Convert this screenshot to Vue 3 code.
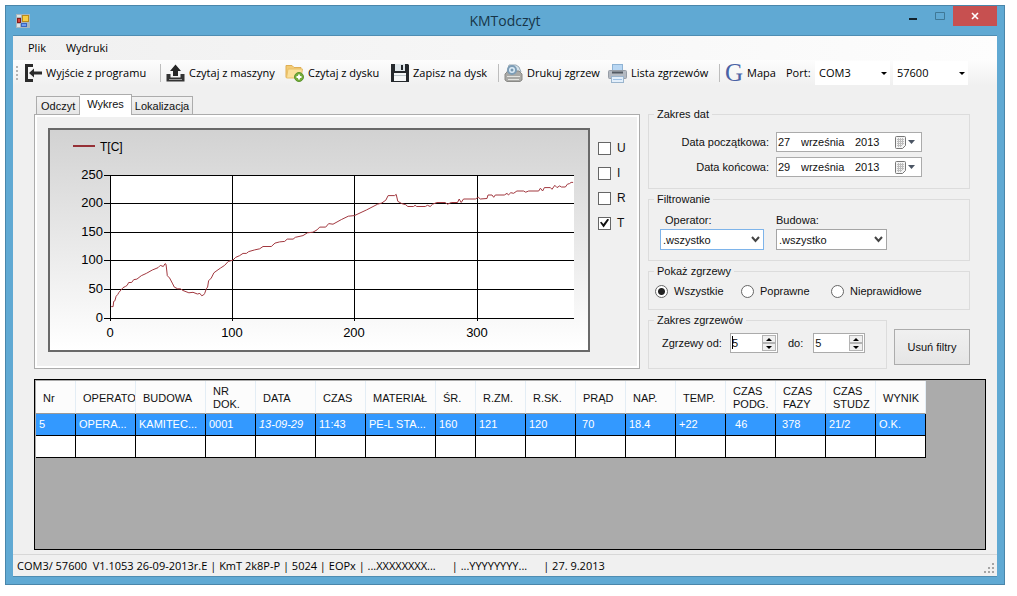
<script setup>
import { ref, reactive } from 'vue'

const menus = ['Plik', 'Wydruki']
const tabs = ['Odczyt', 'Wykres', 'Lokalizacja']
const activeTab = ref('Wykres')

const series = reactive([
  { name: 'U', on: false },
  { name: 'I', on: false },
  { name: 'R', on: false },
  { name: 'T', on: true },
])

const dates = reactive([
  { id: 'from', label: 'Data początkowa:', day: '27', month: 'września', year: '2013' },
  { id: 'to', label: 'Data końcowa:', day: '29', month: 'września', year: '2013' },
])

const filters = [
  { id: 'operator', label: 'Operator:' },
  { id: 'budowa', label: 'Budowa:' },
]

const kinds = ['Wszystkie', 'Poprawne', 'Nieprawidłowe']
const kind = ref('Wszystkie')

const ranges = reactive([
  { id: 'first', label: 'Zgrzewy od:', value: 5 },
  { id: 'last', label: 'do:', value: 5 },
])

const columns = [
  { w: 40, head: 'Nr', cell: '5' },
  { w: 60, head: 'OPERATO', cell: 'OPERA...' },
  { w: 70, head: 'BUDOWA', cell: 'KAMITEC...' },
  { w: 50, head: 'NR DOK.', cell: '0001' },
  { w: 60, head: 'DATA', cell: '13-09-29', italic: true },
  { w: 50, head: 'CZAS', cell: '11:43' },
  { w: 70, head: 'MATERIAŁ', cell: 'PE-L STA...' },
  { w: 40, head: 'ŚR.', cell: '160' },
  { w: 50, head: 'R.ZM.', cell: '121' },
  { w: 50, head: 'R.SK.', cell: '120' },
  { w: 50, head: 'PRĄD', cell: '\u00a070' },
  { w: 50, head: 'NAP.', cell: '18.4' },
  { w: 50, head: 'TEMP.', cell: '+22' },
  { w: 50, head: 'CZAS PODG.', cell: '\u00a0\u00a046' },
  { w: 50, head: 'CZAS FAZY', cell: '\u00a0378' },
  { w: 50, head: 'CZAS STUDZ', cell: '21/2' },
  { w: 50, head: 'WYNIK', cell: 'O.K.' },
]

// Chart geometry: time on x (0-380), temperature on y (0-250)
const plot = { x: 60, y: 45, w: 464, h: 143 }
const px = (t) => plot.x + t * 1.222
const py = (v) => plot.y + plot.h - v * 0.572
const xTicks = [0, 100, 200, 300]
const yTicks = [0, 50, 100, 150, 200, 250]
const samples = [
  [1, 20], [2.5, 20], [3, 29], [4, 30], [5, 38], [6.3, 41], [7.4, 45], [9, 49], [10.6, 53], [12.5, 55], [14, 57],
  [15.3, 62], [17.7, 62], [19.4, 67], [22, 68], [25.6, 74], [29.7, 78], [34.6, 84], [39.3, 88], [41.2, 92], [43.6, 90],
  [45, 95], [45.8, 94], [46.4, 84], [46.9, 74], [48.8, 70], [51, 61], [52.6, 54], [55.4, 51], [57.6, 51], [59.7, 48],
  [64.6, 44], [67.9, 45], [71.5, 42], [73.6, 43], [75, 39], [76.4, 40], [77.5, 43], [78.8, 51], [79.9, 54], [80.7, 65],
  [82.9, 70], [85, 79], [87.6, 83], [90.3, 87], [93.8, 92], [96.8, 99], [100.6, 101], [102.8, 106], [106, 109],
  [108.8, 113], [111.6, 113], [113.5, 116], [118.4, 119], [122.5, 121], [125.2, 125], [132, 125], [135, 131],
  [138.8, 133], [143, 134], [145, 138], [149.8, 138], [151.7, 141], [157.9, 144], [161.5, 149], [166, 150], [169.4, 154],
  [171.6, 159], [176.5, 159], [179, 165], [182.5, 164], [189.3, 172], [195, 178], [200, 179], [210, 189], [219, 199],
  [222.4, 201], [225.7, 206], [227.6, 214], [232.8, 214], [234.2, 216], [235.5, 204], [238.8, 200], [242, 198],
  [243.7, 195], [248.4, 195], [249.7, 197], [251, 195], [258, 195], [259.8, 197], [262, 195], [264, 199], [267.5, 202],
  [274.3, 202], [276.2, 199], [279.2, 202], [284.4, 202], [285.8, 208], [287.4, 202], [289.3, 208], [299, 208],
  [301.4, 211], [303, 208], [308.5, 209], [309.3, 215], [312.6, 215], [314, 211], [315.3, 215], [322.7, 215], [325, 218],
  [326, 215], [328, 219], [330.3, 218], [333, 222], [338.5, 222], [340.2, 220], [342.6, 222], [350.8, 222], [352.2, 227],
  [354, 222], [355.5, 228], [360.4, 228], [361.7, 225], [364, 232], [365.8, 228], [368, 231], [369.4, 229], [372.7, 229],
  [374.3, 234], [376, 235], [377.3, 237], [379, 237],
]
const line = samples.map(([t, v]) => `${px(t).toFixed(1)},${py(v).toFixed(1)}`).join(' ')
</script>

<template>
  <div class="desktop">
    <div class="window">
      <header class="titlebar">
        <svg class="app-icon" width="14" height="14" viewBox="0 0 14 14" aria-hidden="true">
          <rect width="14" height="14" fill="#a9b7bd" />
          <rect x="6.500" y="1.500" width="6" height="6" fill="#f8cf45" stroke="#b98b1c" />
          <rect x="1.500" y="4.500" width="3" height="4" fill="#d8423a" stroke="#861b1b" />
          <rect x="1" y="1" width="4" height="2" fill="#dce3e6" />
          <rect x="5.500" y="9.500" width="5" height="3" fill="#6e9df0" stroke="#3b65bd" />
          <rect x="1" y="10" width="3" height="3" fill="#dce3e6" />
        </svg>
        <h1>KMTodczyt</h1>
        <div class="caption-buttons">
          <button type="button" class="cap" aria-label="Minimalizuj">
            <svg width="10" height="12" viewBox="0 0 10 12"><rect x="1" y="8" width="8" height="2" fill="#12222c" /></svg>
          </button>
          <button type="button" class="cap" aria-label="Maksymalizuj">
            <svg width="10" height="12" viewBox="0 0 10 12"><path d="M.5 2.500h9v7h-9z" fill="none" stroke="#3f7896" /></svg>
          </button>
          <button type="button" class="cap close" aria-label="Zamknij">
            <svg width="8" height="8" viewBox="0 0 8 8"><path d="M1 1l6 6M7 1L1 7" stroke="#fff" stroke-width="1.600" /></svg>
          </button>
        </div>
      </header>

      <div class="client">
        <nav class="menubar">
          <button v-for="m in menus" :key="m" type="button">{{ m }}</button>
        </nav>

        <div class="toolbar" role="toolbar">
          <i class="grip"></i>
          <button type="button" class="tool w-exit">
            <svg width="18" height="18" viewBox="0 0 18 18">
              <path d="M9 1.500H2.500v15H9" fill="none" stroke="#2b2b2b" stroke-width="3" />
              <path d="M5 9l5-4.500v3h8v3h-8v3z" fill="#2b2b2b" />
            </svg>Wyjście z programu
          </button>
          <i class="sep"></i>
          <button type="button" class="tool w-read">
            <svg width="19" height="18" viewBox="0 0 19 18">
              <path d="M9.500 0.500L15 7h-3v5H7V7H4z" fill="#262626" />
              <path d="M.5 10h4v3.500h10V10h4v7.500H.5z" fill="#333" />
              <path d="M3 15.500h13" stroke="#999" />
            </svg>Czytaj z maszyny
          </button>
          <button type="button" class="tool w-disk">
            <svg width="19" height="18" viewBox="0 0 19 18">
              <path d="M1 1.500h6l2 2h7v10H1z" fill="#f3cb74" stroke="#dfaf55" />
              <path d="M3 5h14.500l-1.500 9H1.500z" fill="#fbe09a" stroke="#e8bf68" />
              <circle cx="14" cy="13" r="4.500" fill="#76ad39" stroke="#5c9430" />
              <path d="M14 10.500v5M11.500 13h5" stroke="#fff" stroke-width="1.800" />
            </svg>Czytaj z dysku
          </button>
          <button type="button" class="tool w-save">
            <svg width="18" height="18" viewBox="0 0 18 18">
              <path d="M0 0h17l1 1v17H0z" fill="#25292d" />
              <rect x="4" y="0" width="10" height="7" fill="#dfe6ea" />
              <rect x="10" y="1" width="2" height="5" fill="#25292d" />
              <rect x="3" y="9" width="12" height="8" fill="#f5f7f8" />
              <path d="M3 11.500h12" stroke="#b9c4ca" />
            </svg>Zapisz na dysk
          </button>
          <i class="sep"></i>
          <button type="button" class="tool w-print">
            <svg width="19" height="18" viewBox="0 0 19 18">
              <path d="M3 8l2-7h7l3 2 2 5z" fill="#d5e3ec" stroke="#9aa9b3" />
              <path d="M1 10l3-3h11l3 3v6l-2 1.500H3L1 16z" fill="#a9a9a6" stroke="#8a8a87" />
              <path d="M3 12.500h13M4 15.500h11" stroke="#e3e3df" />
              <circle cx="8" cy="6" r="4" fill="#dcecf7" stroke="#7d9db6" stroke-width="2" />
              <circle cx="8" cy="6" r="1.500" fill="#7798b1" />
            </svg>Drukuj zgrzew
          </button>
          <button type="button" class="tool w-list">
            <svg width="19" height="19" viewBox="0 0 19 19">
              <rect x="4.500" y=".5" width="10" height="7" fill="#b9d7f3" stroke="#8fb3d4" />
              <rect x=".5" y="6.500" width="18" height="8" rx="1" fill="#b4bac2" stroke="#969da6" />
              <path d="M4 8.500h11" stroke="#525a63" stroke-width="2" />
              <rect x="3.500" y="12.500" width="12" height="6" fill="#e3effb" stroke="#9bb5cd" />
              <path d="M5 15.500h9" stroke="#9ec2e6" />
            </svg>Lista zgrzewów
          </button>
          <i class="sep"></i>
          <button type="button" class="tool w-map">
            <span class="g-icon" aria-hidden="true">G</span>Mapa
          </button>
          <label class="port" for="port">Port:</label>
          <span class="combo flat">
            <select id="port"><option>COM3</option></select>
            <svg width="6" height="3" viewBox="0 0 6 3"><path d="M0 0h6L3 3z" /></svg>
          </span>
          <span class="combo flat">
            <select aria-label="Prędkość"><option>57600</option></select>
            <svg width="6" height="3" viewBox="0 0 6 3"><path d="M0 0h6L3 3z" /></svg>
          </span>
        </div>

        <main>
          <div class="upper">
            <section class="left">
              <div class="tabs" role="tablist">
                <button
                  v-for="t in tabs" :key="t" type="button" role="tab"
                  :class="{ active: activeTab === t }" :aria-selected="activeTab === t"
                  @click="activeTab = t"
                >{{ t }}</button>
              </div>
              <div class="tabpage">
                <div class="chart">
                  <svg viewBox="0 0 538 220" role="img" aria-label="T[C]">
                    <rect :x="plot.x" :y="plot.y" :width="plot.w" :height="plot.h" fill="#fff" />
                    <g stroke="#000" shape-rendering="crispEdges">
                      <line v-for="v in yTicks" :key="v" :x1="plot.x - 6" :x2="plot.x + plot.w" :y1="Math.floor(py(v)) + 0.5" :y2="Math.floor(py(v)) + 0.5" />
                      <line v-for="t in xTicks" :key="t" :x1="Math.round(px(t)) + 0.5" :x2="Math.round(px(t)) + 0.5" :y1="plot.y" :y2="plot.y + plot.h + 3" />
                    </g>
                    <g class="axis" text-anchor="end">
                      <text v-for="v in yTicks" :key="v" :x="plot.x - 7" :y="Math.floor(py(v)) + 4">{{ v }}</text>
                    </g>
                    <g class="axis" text-anchor="middle">
                      <text v-for="t in xTicks" :key="t" :x="Math.round(px(t))" y="207">{{ t }}</text>
                    </g>
                    <polyline :points="line" fill="none" stroke="#a2383f" />
                    <line x1="23" x2="45" y1="16" y2="16" stroke="#963036" stroke-width="2" />
                    <text class="legend" x="50" y="21">T[C]</text>
                  </svg>
                </div>
                <div class="series">
                  <label v-for="s in series" :key="s.name">
                    <input v-model="s.on" type="checkbox" />{{ s.name }}
                  </label>
                </div>
              </div>
            </section>

            <section class="right">
              <fieldset class="dates">
                <legend>Zakres dat</legend>
                <template v-for="d in dates" :key="d.id">
                  <label :for="d.id">{{ d.label }}</label>
                  <span class="picker">
                    <input :id="d.id" v-model="d.day" class="day" type="text" />
                    <input v-model="d.month" class="month" type="text" aria-label="Miesiąc" />
                    <input v-model="d.year" class="year" type="text" aria-label="Rok" />
                    <button type="button" aria-label="Kalendarz">
                      <svg width="20" height="13" viewBox="0 0 20 13">
                        <path d="M.5 1.500q0-1 1-1h8q1 0 1 1v8l-3 3h-6q-1 0-1-1z" fill="#f4f4f4" stroke="#777" />
                        <path d="M2 3.500h7M2 5.500h7M2 7.500h7M2 9.500h5M3.500 2v9M5.500 2v9M7.500 2v7" stroke="#bdbdbd" />
                        <path d="M13 4h7l-3.500 4z" fill="#4b5564" />
                      </svg>
                    </button>
                  </span>
                </template>
              </fieldset>

              <fieldset class="filters">
                <legend>Filtrowanie</legend>
                <div v-for="f in filters" :key="f.id" :class="['filter', f.id]">
                  <label :for="f.id">{{ f.label }}</label>
                  <span class="combo boxed">
                    <select :id="f.id"><option>.wszystko</option></select>
                    <svg width="9" height="7" viewBox="0 0 9 7"><path d="M1 1l3.500 4L8 1" fill="none" stroke="#444" stroke-width="2" /></svg>
                  </span>
                </div>
              </fieldset>

              <fieldset class="kinds">
                <legend>Pokaż zgrzewy</legend>
                <label v-for="k in kinds" :key="k">
                  <input v-model="kind" type="radio" name="kind" :value="k" />{{ k }}
                </label>
              </fieldset>

              <div class="bottom">
                <fieldset class="range">
                  <legend>Zakres zgrzewów</legend>
                  <template v-for="r in ranges" :key="r.id">
                    <label :for="r.id">{{ r.label }}</label>
                    <span :class="['spin', r.id]">
                      <i v-if="r.id === 'first'" class="caret"></i>
                      <input :id="r.id" v-model.number="r.value" type="number" />
                      <span class="arrows">
                        <button type="button" aria-label="Więcej" @click="r.value++">
                          <svg width="6" height="3" viewBox="0 0 6 3"><path d="M0 3h6L3 0z" /></svg>
                        </button>
                        <button type="button" aria-label="Mniej" @click="r.value--">
                          <svg width="6" height="3" viewBox="0 0 6 3"><path d="M0 0h6L3 3z" /></svg>
                        </button>
                      </span>
                    </span>
                  </template>
                </fieldset>
                <button type="button" class="clear">Usuń filtry</button>
              </div>
            </section>
          </div>

          <div class="grid">
            <table>
              <colgroup>
                <col v-for="(c, i) in columns" :key="i" :style="{ width: c.w + 'px' }" />
              </colgroup>
              <thead>
                <tr><th v-for="(c, i) in columns" :key="i" scope="col">{{ c.head }}</th></tr>
              </thead>
              <tbody>
                <tr class="selected">
                  <td v-for="(c, i) in columns" :key="i" :class="{ italic: c.italic }">{{ c.cell }}</td>
                </tr>
                <tr><td v-for="(c, i) in columns" :key="i"></td></tr>
              </tbody>
            </table>
          </div>
        </main>

        <footer class="status">
          <span>COM3/ 57600&nbsp; V1.1053 26-09-2013r.E | KmT 2k8P-P | 5024 | EOPx | ...XXXXXXXX...</span>
          <span>| ...YYYYYYYY...</span>
          <span>| 27. 9.2013</span>
          <svg class="resize" width="11" height="11" viewBox="0 0 11 11" fill="#a5a5a5" aria-hidden="true">
            <path d="M8 0h2v2H8zM4 4h2v2H4zM8 4h2v2H8zM0 8h2v2H0zM4 8h2v2H4zM8 8h2v2H8z" />
          </svg>
        </footer>
      </div>
    </div>
  </div>
</template>

<style>
body { background: #fff; }
</style>

<style scoped>
* { box-sizing: border-box; }
button, input, select { font: inherit; color: inherit; margin: 0; padding: 0; border: 0; background: none; border-radius: 0; outline: none; }
svg { display: block; flex: none; }

.desktop {
  display: flex; min-height: 100vh; padding: 5px 12px 11px 5px;
  font: 11px/14px "Liberation Sans", Arial, sans-serif; color: #111;
}
.window {
  flex: 1; min-width: 0; display: flex; flex-direction: column;
  background: #60a9d3; border: 1px solid #4a86aa; padding: 0 7px 7px;
}

.titlebar { display: grid; grid-template-columns: 1fr auto 1fr; align-items: center; height: 29px; }
.app-icon { margin-left: 3px; }
h1 { margin: 0; font: 400 14px/20px "Open Sans", "Noto Sans", sans-serif; color: #173548; }
.caption-buttons { display: flex; justify-content: flex-end; align-self: start; }
.cap { width: 27px; height: 20px; display: flex; align-items: center; justify-content: center; }
.cap.close { width: 44px; background: #c75050; }

.client { flex: 1; display: flex; flex-direction: column; background: #f0f0f0; border: 1px solid #4f8db2; border-width: 1px 0; }

.menubar, .toolbar, .status { font: 11px/16px "Open Sans", "Noto Sans", sans-serif; color: #000; }
.menubar { display: flex; gap: 20px; padding: 0 15px; height: 24px; align-items: center; background: linear-gradient(to right, #f0f0f0, #fdfdfd); }

.toolbar { display: flex; align-items: center; height: 26px; padding-left: 3px; background: linear-gradient(#fdfdfd, #f0f0f0); }
.grip { width: 2px; height: 15px; margin-right: 6px; background: repeating-linear-gradient(#b4b4b4 0 2px, transparent 2px 4px); }
.sep { width: 1px; height: 18px; margin: 0 5px; background: #bdbdbd; }
.tool { display: flex; align-items: center; gap: 4px; white-space: nowrap; }
.w-exit { width: 131px; }
.w-read { width: 119px; }
.w-disk { width: 106px; }
.w-save { width: 102px; }
.w-print { width: 104px; }
.w-list { width: 106px; }
.w-map { width: 61px; }
.g-icon { width: 18px; font: 25px/26px "Liberation Serif", serif; color: #4a62a5; }
.port { width: 29px; }

.combo { position: relative; display: flex; }
.combo select { appearance: none; width: 100%; }
.combo svg { position: absolute; pointer-events: none; top: 0; bottom: 0; margin: auto; }
.flat { width: 75px; height: 24px; margin-right: 3px; background: #fff; }
.flat select { padding-left: 4px; }
.flat svg { right: 3px; }

main { flex: 1; display: flex; flex-direction: column; padding: 8px 11px 4px 21px; }
.upper { display: flex; gap: 8px; padding-right: 16px; }
.left { flex: 1; min-width: 0; display: flex; flex-direction: column; }
.tabs { display: flex; align-items: flex-end; padding-left: 2px; height: 20px; }
.tabs button { height: 18px; padding: 0 4px; border: 1px solid #acacac; border-width: 1px 1px 0 0; background: linear-gradient(#f2f2f2, #e6e6e6); }
.tabs button:first-child { border-left-width: 1px; }
.tabs button:last-child { padding: 0 3px; }
.tabs .active { position: relative; height: 21px; padding: 0 7px 3px; margin-bottom: -1px; background: #fff; }
.tabpage { flex: 1; display: flex; gap: 8px; padding: 13px; border: 1px solid #acacac; box-shadow: inset 0 0 0 2px #fff; }
.chart { flex: 1; min-width: 0; align-self: flex-start; border: 2px solid #696969; background: linear-gradient(#d2d2d2, #fff); }
.chart svg { width: 100%; }
.axis text { font-size: 13px; }
.legend { font-size: 12px; }

.series { display: flex; flex-direction: column; gap: 11px; width: 28px; padding-top: 13px; }
.series label { display: flex; align-items: center; gap: 6px; height: 14px; font-size: 12px; }
.series input { appearance: none; flex: none; width: 13px; height: 13px; border: 1px solid #666; background: #fff; }
.series input:checked::before { content: ""; display: block; width: 9px; height: 9px; margin: 1px; background: #111; clip-path: polygon(0 45%, 15% 35%, 38% 62%, 85% 0, 100% 15%, 40% 100%); }

.right { width: 322px; flex: none; display: flex; flex-direction: column; gap: 4px; padding-top: 14px; }
fieldset { min-width: 0; margin: 0; border: 1px solid #dcdcdc; }
legend { height: 13px; padding: 0 3px; line-height: 13px; }
.dates { display: grid; grid-template-columns: 1fr 146px; gap: 5px 7px; align-items: center; padding: 11px 47px 11px 5px; }
.dates label { text-align: right; }
.picker { display: flex; align-items: center; height: 20px; padding: 0 5px 0 1px; border: 1px solid #ababab; background: #fff; }
.picker .day { width: 23px; }
.picker .month { width: 54px; }
.picker .year { width: 40px; }

.filters { display: flex; gap: 12px; padding: 7px 11px 10px; }
.filters legend { margin-left: -6px; }
.filter { display: flex; flex-direction: column; gap: 2px; width: 111px; }
.operator { width: 104px; }
.operator label { padding-left: 5px; }
.boxed { height: 21px; border: 1px solid #a5a5a5; background: #fff; }
.operator .boxed { border-color: #7eb4ea; }
.boxed select { padding-left: 2px; }
.boxed svg { right: 3px; }

.kinds { display: grid; grid-template-columns: 86px 90px 1fr; padding: 6px 6px 11px; }
.kinds legend { margin-left: -1px; }
.kinds label { display: flex; align-items: center; gap: 6px; }
.kinds input { appearance: none; flex: none; width: 13px; height: 13px; border: 1px solid #666; border-radius: 50%; background: #fff; }
.kinds input:checked { background: radial-gradient(circle, #222 3px, #fff 4px); }

.bottom { display: flex; justify-content: space-between; align-items: flex-end; }
.range { display: flex; align-items: center; width: 239px; padding: 6px 13px 15px; }
.range legend { margin-left: -8px; }
.range label { margin-right: 8px; white-space: nowrap; }
.spin { position: relative; display: flex; height: 20px; border: 1px solid #ababab; background: #fff; }
.spin.first { width: 48px; margin-right: 10px; }
.spin.last { width: 52px; margin-left: 2px; }
.spin input { appearance: textfield; flex: 1; min-width: 0; padding-left: 1px; }
.spin input::-webkit-inner-spin-button { appearance: none; margin: 0; }
.caret { position: absolute; left: 1px; top: 2px; width: 1px; height: 13px; background: #000; }
.arrows { display: flex; flex-direction: column; width: 16px; padding: 1px; }
.arrows button { flex: 1; display: flex; align-items: center; justify-content: center; border: 1px solid #b4b4b4; background: #f0f0f0; }
.clear { width: 76px; height: 36px; margin-bottom: 4px; border: 1px solid #acacac; background: linear-gradient(#f0f0f0, #e5e5e5); }

.grid { flex: 1; margin-top: 10px; padding-left: 1px; border: 1px solid #000; background: #ababab; overflow: hidden; }
table { table-layout: fixed; width: 890px; border-collapse: separate; border-spacing: 0; margin-top: 1px; }
th, td { overflow: hidden; text-align: left; white-space: nowrap; }
th { height: 33px; padding: 2px 0 0 7px; font-weight: 400; line-height: 13px; white-space: normal; background: #fcfcfc; border-right: 1px solid #e3edf5; border-bottom: 1px solid #9a9a9a; }
td { height: 22px; padding: 0 0 1px 3px; background: #fff; border: 1px solid #000; border-width: 0 1px 1px 0; }
.selected td { background: #3399ff; color: #fff; }
.italic { font-style: italic; }

.status { position: relative; display: flex; align-items: center; gap: 16px; height: 22px; padding: 0 4px; border-top: 1px solid #d7d7d7; white-space: pre; }
.resize { position: absolute; right: 2px; bottom: 2px; }
</style>
